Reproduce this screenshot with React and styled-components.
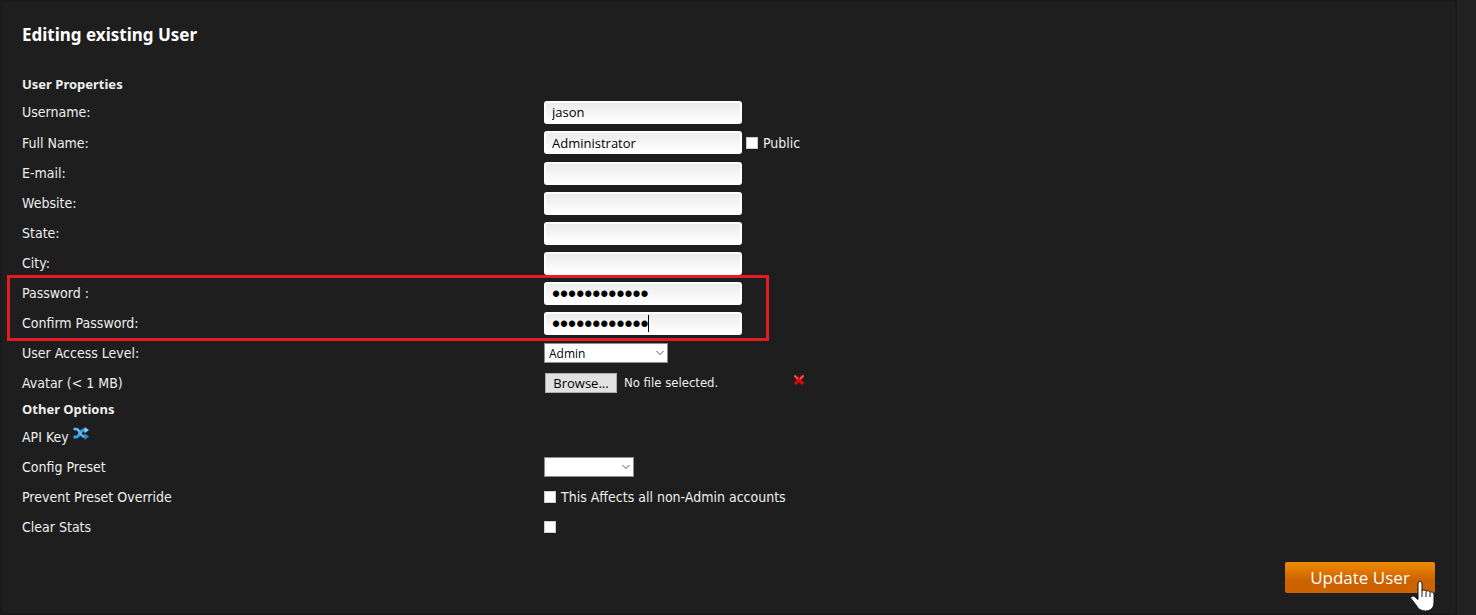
import React, { useState } from 'react';
import styled, { createGlobalStyle } from 'styled-components';

const GlobalStyle = createGlobalStyle`
  * {
    box-sizing: border-box;
  }

  body {
    margin: 0;
    background: #222222;
    color: #eeeeee;
    font-family: 'DejaVu Sans Condensed', 'Noto Sans', sans-serif;
    font-size: 14px;
    line-height: 20px;
  }
`;

const Page = styled.main`
  padding-right: 19px;
`;

const Panel = styled.form`
  border: 2px solid #1a1a1a;
  background: #1e1e1e;
  padding: 20px;
`;

const Title = styled.h1`
  margin: 0 0 25px;
  color: #ffffff;
  font-family: 'Noto Sans', sans-serif;
  font-size: 17px;
  font-weight: 700;
  line-height: 26px;
`;

const SectionTitle = styled.h2`
  margin: 0;
  padding-bottom: 2px;
  font-family: 'Noto Sans', sans-serif;
  font-size: 13px;
  font-weight: 700;
  line-height: 22px;
`;

const Row = styled.div`
  display: grid;
  grid-template-columns: 522fr 891fr;
  align-items: center;
  min-height: ${(props) => (props.$tall ? '31px' : '30px')};
`;

const Label = styled.label`
  display: flex;
  align-items: center;
  gap: 4px;
`;

const Controls = styled.div`
  display: flex;
  align-items: center;
  gap: 4px;
`;

const TextInput = styled.input`
  display: block;
  width: 198px;
  height: 23px;
  padding: 0 6px;
  border: 2px solid #ffffff;
  border-radius: 3px;
  outline: none;
  background: linear-gradient(#ebebeb, #ffffff);
  color: #000000;
  font-family: 'Open Sans', sans-serif;
  font-size: 13px;
`;

const PasswordInput = styled(TextInput)`
  padding-top: 2px;
  font-family: 'Liberation Sans', sans-serif;
  font-size: 23px;
`;

const CaretBox = styled.div`
  position: relative;
`;

const Caret = styled.span`
  position: absolute;
  top: 3px;
  left: 104px;
  width: 1px;
  height: 17px;
  background: #000000;
`;

const Checkbox = styled.input`
  appearance: none;
  width: 12px;
  height: 12px;
  margin: 0 1px 0 0;
  border: 1px solid #cccccc;
  background: #ffffff;

  &:checked {
    background: #ef8b00;
  }
`;

const SelectBox = styled.div`
  position: relative;
  width: ${(props) => props.$width};
  height: 20px;
`;

const Select = styled.select`
  appearance: none;
  display: block;
  width: 100%;
  height: 20px;
  padding: 0 4px;
  border: 1px solid #8c8c8c;
  border-radius: 0;
  background: #ffffff;
  color: #000000;
  font-family: 'Open Sans', sans-serif;
  font-size: 12px;
`;

const Chevron = styled.svg`
  position: absolute;
  top: 7px;
  right: 4px;
  pointer-events: none;
`;

const FileInput = styled.input`
  position: absolute;
  width: 1px;
  height: 1px;
  opacity: 0;
`;

const FileButton = styled.label`
  width: 72px;
  height: 20px;
  margin-left: 1px;
  border: 1px solid #adadad;
  background: #e1e1e1;
  color: #000000;
  font-family: 'Open Sans', sans-serif;
  font-size: 13px;
  line-height: 18px;
  text-align: center;
`;

const FileName = styled.span`
  width: 168px;
  padding-left: 3px;
  font-size: 13px;
`;

const IconButton = styled.button`
  display: block;
  align-self: flex-start;
  padding: 0;
  border: none;
  background: none;
  line-height: 0;
  cursor: pointer;
`;

const PasswordGroup = styled.div`
  position: relative;
`;

const Highlight = styled.div`
  position: absolute;
  top: -3px;
  bottom: -3px;
  left: -15px;
  width: 762px;
  border: 3px solid #e31b23;
  pointer-events: none;
`;

const Footer = styled.div`
  display: flex;
  justify-content: flex-end;
  padding-top: 20px;
`;

const SubmitBox = styled.div`
  position: relative;
`;

const SubmitButton = styled.button`
  display: block;
  width: 150px;
  height: 31px;
  padding: 0;
  border: none;
  border-radius: 2px;
  background: linear-gradient(#ef8c00, #cc6200 60%, #cc6200);
  color: #ffffff;
  font-family: 'Open Sans', sans-serif;
  font-size: 17px;
  cursor: pointer;
`;

const Pointer = styled.svg`
  position: absolute;
  top: 18px;
  right: 0;
  pointer-events: none;
`;

const SelectField = ({ id, width, options }) => (
  <SelectBox $width={width}>
    <Select id={id}>
      {options.map((option) => (
        <option key={option}>{option}</option>
      ))}
    </Select>
    <Chevron width="8" height="6" viewBox="0 0 8 6">
      <path d="M0.5 1L4 4.5L7.5 1" fill="none" stroke="#555555" />
    </Chevron>
  </SelectBox>
);

const DeleteIcon = () => (
  <svg width="12" height="13" viewBox="0 0 12 13">
    <path d="M2 3L10 11M10 3L2 11" stroke="#8d0808" strokeWidth="4" />
    <path d="M1.5 2.5L10 11M10.5 2.5L2 11" stroke="#d01414" strokeWidth="2.4" />
    <path d="M1.5 2.5L5 6M10.5 2.5L7 6" stroke="#f46a60" strokeWidth="1.2" />
  </svg>
);

const ShuffleIcon = () => (
  <svg width="16" height="14" viewBox="0 1 16 14">
    <path d="M0.5 11H3C6.5 11 7 4 11 4H12" fill="none" stroke="#2d9fe8" strokeWidth="3" />
    <path d="M0.5 3H3C7 3 7 10.5 11 10.5H12" fill="none" stroke="#65b8f0" strokeWidth="2.6" />
    <path d="M11.5 1L16 4L11.5 7.2Z" fill="#8acbf8" />
    <path d="M11.5 7.2L16 10.5L11.5 14Z" fill="#2489d0" />
  </svg>
);

const textFields = [
  { id: 'email', label: 'E-mail:' },
  { id: 'website', label: 'Website:' },
  { id: 'state', label: 'State:' },
  { id: 'city', label: 'City:' },
];

export default function App() {
  const [fileName, setFileName] = useState('No file selected.');

  const handleFile = (e) => {
    const file = e.target.files[0];
    setFileName(file ? file.name : 'No file selected.');
  };

  return (
    <Page>
      <GlobalStyle />
      <Panel onSubmit={(e) => e.preventDefault()}>
        <Title>Editing existing User</Title>

        <SectionTitle>User Properties</SectionTitle>
        <Row>
          <Label htmlFor="username">Username:</Label>
          <TextInput id="username" defaultValue="jason" />
        </Row>
        <Row $tall>
          <Label htmlFor="fullname">Full Name:</Label>
          <Controls>
            <TextInput id="fullname" defaultValue="Administrator" />
            <Checkbox id="public" type="checkbox" />
            <Label htmlFor="public">Public</Label>
          </Controls>
        </Row>
        {textFields.map((field) => (
          <Row key={field.id}>
            <Label htmlFor={field.id}>{field.label}</Label>
            <TextInput id={field.id} />
          </Row>
        ))}

        <PasswordGroup>
          <Row>
            <Label htmlFor="password">Password :</Label>
            <PasswordInput id="password" type="password" defaultValue="abcdefghijkl" />
          </Row>
          <Row>
            <Label htmlFor="confirm">Confirm Password:</Label>
            <CaretBox>
              <PasswordInput id="confirm" type="password" defaultValue="abcdefghijkl" />
              <Caret />
            </CaretBox>
          </Row>
          <Highlight />
        </PasswordGroup>

        <Row>
          <Label htmlFor="level">User Access Level:</Label>
          <SelectField id="level" width="124px" options={['Admin', 'User']} />
        </Row>
        <Row>
          <Label htmlFor="avatar">Avatar (&lt; 1 MB)</Label>
          <Controls>
            <FileInput id="avatar" type="file" onChange={handleFile} />
            <FileButton htmlFor="avatar">Browse...</FileButton>
            <FileName>{fileName}</FileName>
            <IconButton type="button" aria-label="Delete avatar">
              <DeleteIcon />
            </IconButton>
          </Controls>
        </Row>

        <SectionTitle>Other Options</SectionTitle>
        <Row>
          <Controls>
            API Key
            <IconButton type="button" aria-label="Generate API key">
              <ShuffleIcon />
            </IconButton>
          </Controls>
        </Row>
        <Row>
          <Label htmlFor="preset">Config Preset</Label>
          <SelectField id="preset" width="90px" options={['']} />
        </Row>
        <Row>
          <Label htmlFor="override">Prevent Preset Override</Label>
          <Controls>
            <Checkbox id="override" type="checkbox" />
            <Label htmlFor="override">This Affects all non-Admin accounts</Label>
          </Controls>
        </Row>
        <Row>
          <Label htmlFor="clear">Clear Stats</Label>
          <Checkbox id="clear" type="checkbox" />
        </Row>

        <Footer>
          <SubmitBox>
            <SubmitButton type="submit">Update User</SubmitButton>
            <Pointer width="26" height="32" viewBox="0 0 26 32">
              <path
                d="M9 4C9 0.5 13 0.5 13 4V11C13.5 9.5 16.500 9.500 17 11.500C18 10 20.500 10.500 21 12.500C22.500 11.500 25 12 25 15V22C25 28 21.500 31 16.500 31C11.500 31 9 28.500 7 25L2 18.500C1 16 4.500 15 6.500 17.500L9 19.500Z"
                fill="#ffffff"
                stroke="#161616"
              />
              <path d="M13 11V17M17 12V17M21 13V17" stroke="#161616" />
            </Pointer>
          </SubmitBox>
        </Footer>
      </Panel>
    </Page>
  );
}
